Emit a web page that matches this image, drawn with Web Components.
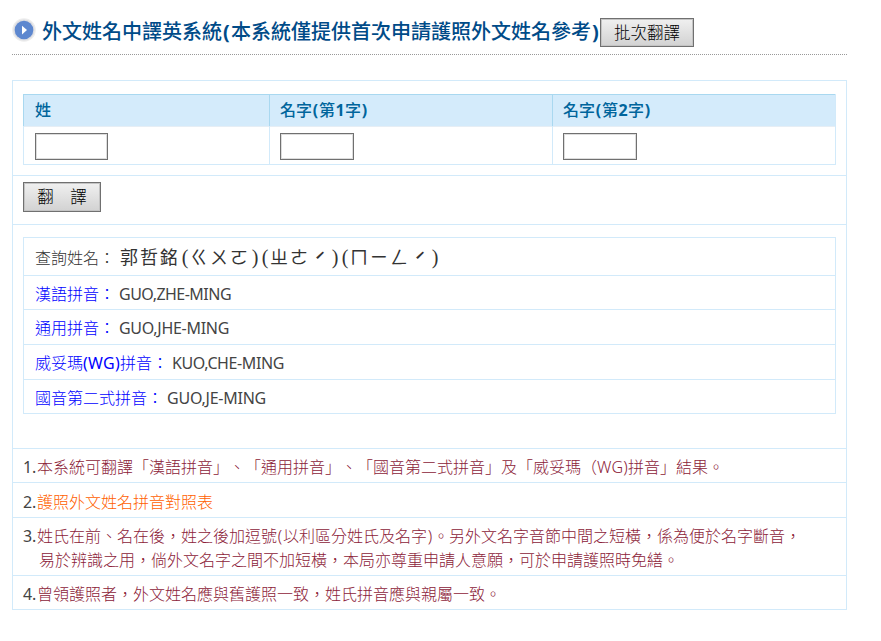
<!DOCTYPE html>
<html lang="zh-Hant"><head><meta charset="utf-8"><title>外文姓名中譯英系統</title>
<style>
html,body{margin:0;background:#fff}
body{font:16px/24px "Noto Sans","Noto Sans CJK TC",sans-serif;color:#444;text-spacing-trim:space-all}
</style></head><body>
<name-app></name-app>
<script>
const define=(name,html,init)=>customElements.define(name,class extends HTMLElement{
  constructor(){super();this.attachShadow({mode:'open'}).innerHTML=html;}
  connectedCallback(){if(init)init(this);}
});

/* Inline text whose letter spacing is adjusted to a given advance width;
   a single character is centred in that width instead. */
define('fit-text',`<style>:host{display:inline-block;white-space:pre}:host([one]){text-align:center}</style><slot></slot>`,el=>{
  const want=+el.getAttribute('w'),n=[...el.textContent].length;
  el.style.letterSpacing='0px';
  const have=el.getBoundingClientRect().width;
  if(n===1)el.setAttribute('one','');
  else el.style.letterSpacing=((want-have)/n)+'px';
  el.style.width=want+'px';
});

define('page-title',`<style>
:host{display:flex;margin:0 34px 0 12px;border-bottom:1px dotted #999;box-sizing:border-box;height:55px;align-items:flex-start}
svg{width:24px;height:24px;margin:18px 6px 0 0;flex:none}
h1{margin:17px 0 0;font-size:20px;line-height:28px;font-weight:500;color:#004b88;white-space:nowrap;width:558px;font-family:"Noto Sans CJK TC",sans-serif}
::slotted(push-button){margin-top:18px}
</style>
<svg viewBox="0 0 24 24"><circle cx="12" cy="12" r="11.8" fill="#ededed"/><circle cx="12" cy="12" r="10.6" fill="#dcdde2"/><circle cx="12" cy="12" r="9.3" fill="#5d87cf"/><path d="M10 7.8v8.6l5-4.3z" fill="#fff"/></svg>
<h1><slot></slot></h1><slot name="action"></slot>`);

define('push-button',`<style>
:host{display:block;flex:none}
button{display:block;width:100%;height:100%;box-sizing:border-box;border:1px solid #707070;box-shadow:inset 0 0 0 1px #c4c4c4;background:linear-gradient(#f0f0f0,#d2d2d2);font:300 16.5px/24px "Noto Sans CJK TC",sans-serif;color:#000;padding:0 0 2px;white-space:pre;border-radius:0}
</style><button type="button"><slot></slot></button>`);

define('name-field',`<style>
:host{display:block;box-sizing:border-box;border-left:1px solid #d2eafa}
header{height:32px;box-sizing:border-box;background:#d4ebfb;border-top:1px solid #a9d8f0;margin-left:-1px;border-left:1px solid #a9d8f0;padding-left:var(--in,10px);line-height:29px;font-weight:500;color:#00659c;font-family:"Noto Sans CJK TC",sans-serif}
div{border-top:1px solid #e6eef5;height:38px;padding:6px 0 0 var(--in,10px);box-sizing:border-box}
input{display:block;width:var(--w,74px);height:27px;box-sizing:border-box;border:1px solid #707070;box-shadow:inset 0 0 0 1px #ddd;padding:0;margin:0;background:#fff}
</style><header><slot></slot></header><div><input></div>`);

define('name-form',`<style>
:host{display:grid;grid-template-columns:246px 283px 1fr;border-bottom:1px solid #d2eafa;border-right:1px solid #d2eafa;height:71px;box-sizing:border-box}
</style><slot></slot>`);

define('result-row',`<style>
:host{display:block;height:var(--h);box-sizing:border-box;border-bottom:1px solid #d2eafa;padding:6px 0 0 11px;white-space:nowrap}
b{font-weight:300;color:var(--c,#00f)}
</style><b><slot name="label"></slot></b><slot></slot>`);

define('result-list',`<style>:host{display:block;border:1px solid #d2eafa;border-bottom:0}</style><slot></slot>`);

define('panel-row',`<style>
:host{display:block;box-sizing:border-box;height:var(--h);padding:var(--t) 10px 0;border-bottom:1px solid #d2eafa}
</style><slot></slot>`);

define('note-line',`<style>
:host{display:flex;white-space:nowrap}
i{font-style:normal;width:14px;flex:none;letter-spacing:-.2px}
div{font-weight:300;color:var(--c,#8c2238)}
</style><i><slot name="num"></slot></i><div><slot></slot></div>`);

define('name-app',`<style>
:host{display:block;height:641px;overflow:hidden}
main{display:block;margin:25px 34px 0 12px;border:1px solid #d2eafa;border-bottom:0}
fit-text.l{font-family:"Noto Sans",sans-serif;font-weight:400}
fit-text.w{font-family:"Noto Sans",sans-serif;font-weight:300}
fit-text.b{font-family:"Noto Sans",sans-serif;font-weight:700}
.c{margin-right:5px}
.k{font:400 18px/24px "Noto Sans CJK TC",sans-serif;color:#333}
.k .p{font-family:"Liberation Serif",serif;font-size:20px}
.k .t{vertical-align:-5px;line-height:0;font-size:20px;font-weight:500}
</style>
<page-title><fit-text w="180">外文姓名中譯英系統</fit-text><fit-text class="b" w="9">(</fit-text><fit-text w="360">本系統僅提供首次申請護照外文姓名參考</fit-text><fit-text class="b" w="9">)</fit-text><push-button slot="action" style="width:94px;height:29px">批次翻譯</push-button></page-title>
<main>
<panel-row style="--h:95px;--t:13px"><name-form>
<name-field style="--in:11px;--w:73px">姓</name-field>
<name-field>名字<fit-text class="b" w="7">(</fit-text>第<fit-text class="b" w="10">1</fit-text>字<fit-text class="b" w="7">)</fit-text></name-field>
<name-field>名字<fit-text class="b" w="7">(</fit-text>第<fit-text class="b" w="10">2</fit-text>字<fit-text class="b" w="7">)</fit-text></name-field>
</name-form></panel-row>
<panel-row style="--h:49px;--t:6px"><push-button style="width:78px;height:30px">翻　譯</push-button></panel-row>
<panel-row style="--h:224px;--t:12px"><result-list>
<result-row style="--h:38px;--c:#333"><span slot="label">查詢姓名</span><fit-text class="c" slot="label" w="16">：</fit-text><span class="k"><fit-text w="60">郭哲銘</fit-text><fit-text class="p" w="10">(</fit-text><fit-text w="60">ㄍㄨㄛ</fit-text><fit-text class="p" w="10">)</fit-text><fit-text class="p" w="10">(</fit-text><fit-text w="40">ㄓㄜ</fit-text><fit-text class="t" w="20">ˊ</fit-text><fit-text class="p" w="10">)</fit-text><fit-text class="p" w="10">(</fit-text><fit-text w="60">ㄇㄧㄥ</fit-text><fit-text class="t" w="20">ˊ</fit-text><fit-text class="p" w="10">)</fit-text></span></result-row>
<result-row style="--h:34px"><span slot="label">漢語拼音</span><fit-text class="c" slot="label" w="15">：</fit-text><fit-text w="112">GUO,ZHE-MING</fit-text></result-row>
<result-row style="--h:35px"><span slot="label">通用拼音</span><fit-text class="c" slot="label" w="15">：</fit-text><fit-text w="110">GUO,JHE-MING</fit-text></result-row>
<result-row style="--h:35px"><span slot="label">威妥瑪</span><fit-text class="l" slot="label" w="37">(WG)</fit-text><span slot="label">拼音</span><fit-text class="c" slot="label" w="15">：</fit-text><fit-text w="112">KUO,CHE-MING</fit-text></result-row>
<result-row style="--h:34px"><span slot="label">國音第二式拼音</span><fit-text class="c" slot="label" w="15">：</fit-text><fit-text w="99">GUO,JE-MING</fit-text></result-row>
</result-list></panel-row>
<panel-row style="--h:34px;--t:6px"><note-line><span slot="num">1.</span>本系統可翻譯「漢語拼音」、「通用拼音」、「國音第二式拼音」及「威妥瑪<fit-text w="16">（</fit-text><fit-text class="w" w="31">WG)</fit-text>拼音」結果。</note-line></panel-row>
<panel-row style="--h:35px;--t:7px"><note-line style="--c:#ff6000"><span slot="num">2.</span>護照外文姓名拼音對照表</note-line></panel-row>
<panel-row style="--h:58px;--t:6px"><note-line><span slot="num">3.</span>姓氏在前、名在後，姓之後加逗號<fit-text class="w" w="6">(</fit-text>以利區分姓氏及名字<fit-text class="w" w="6">)</fit-text>。另外文名字音節中間之短橫，係為便於名字斷音，</note-line><note-line style="padding-left:2px"><span slot="num"></span>易於辨識之用，倘外文名字之間不加短橫，本局亦尊重申請人意願，可於申請護照時免繕。</note-line></panel-row>
<panel-row style="--h:34px;--t:6px"><note-line><span slot="num">4.</span>曾領護照者，外文姓名應與舊護照一致，姓氏拼音應與親屬一致。</note-line></panel-row>
</main>`);
</script></body></html>
